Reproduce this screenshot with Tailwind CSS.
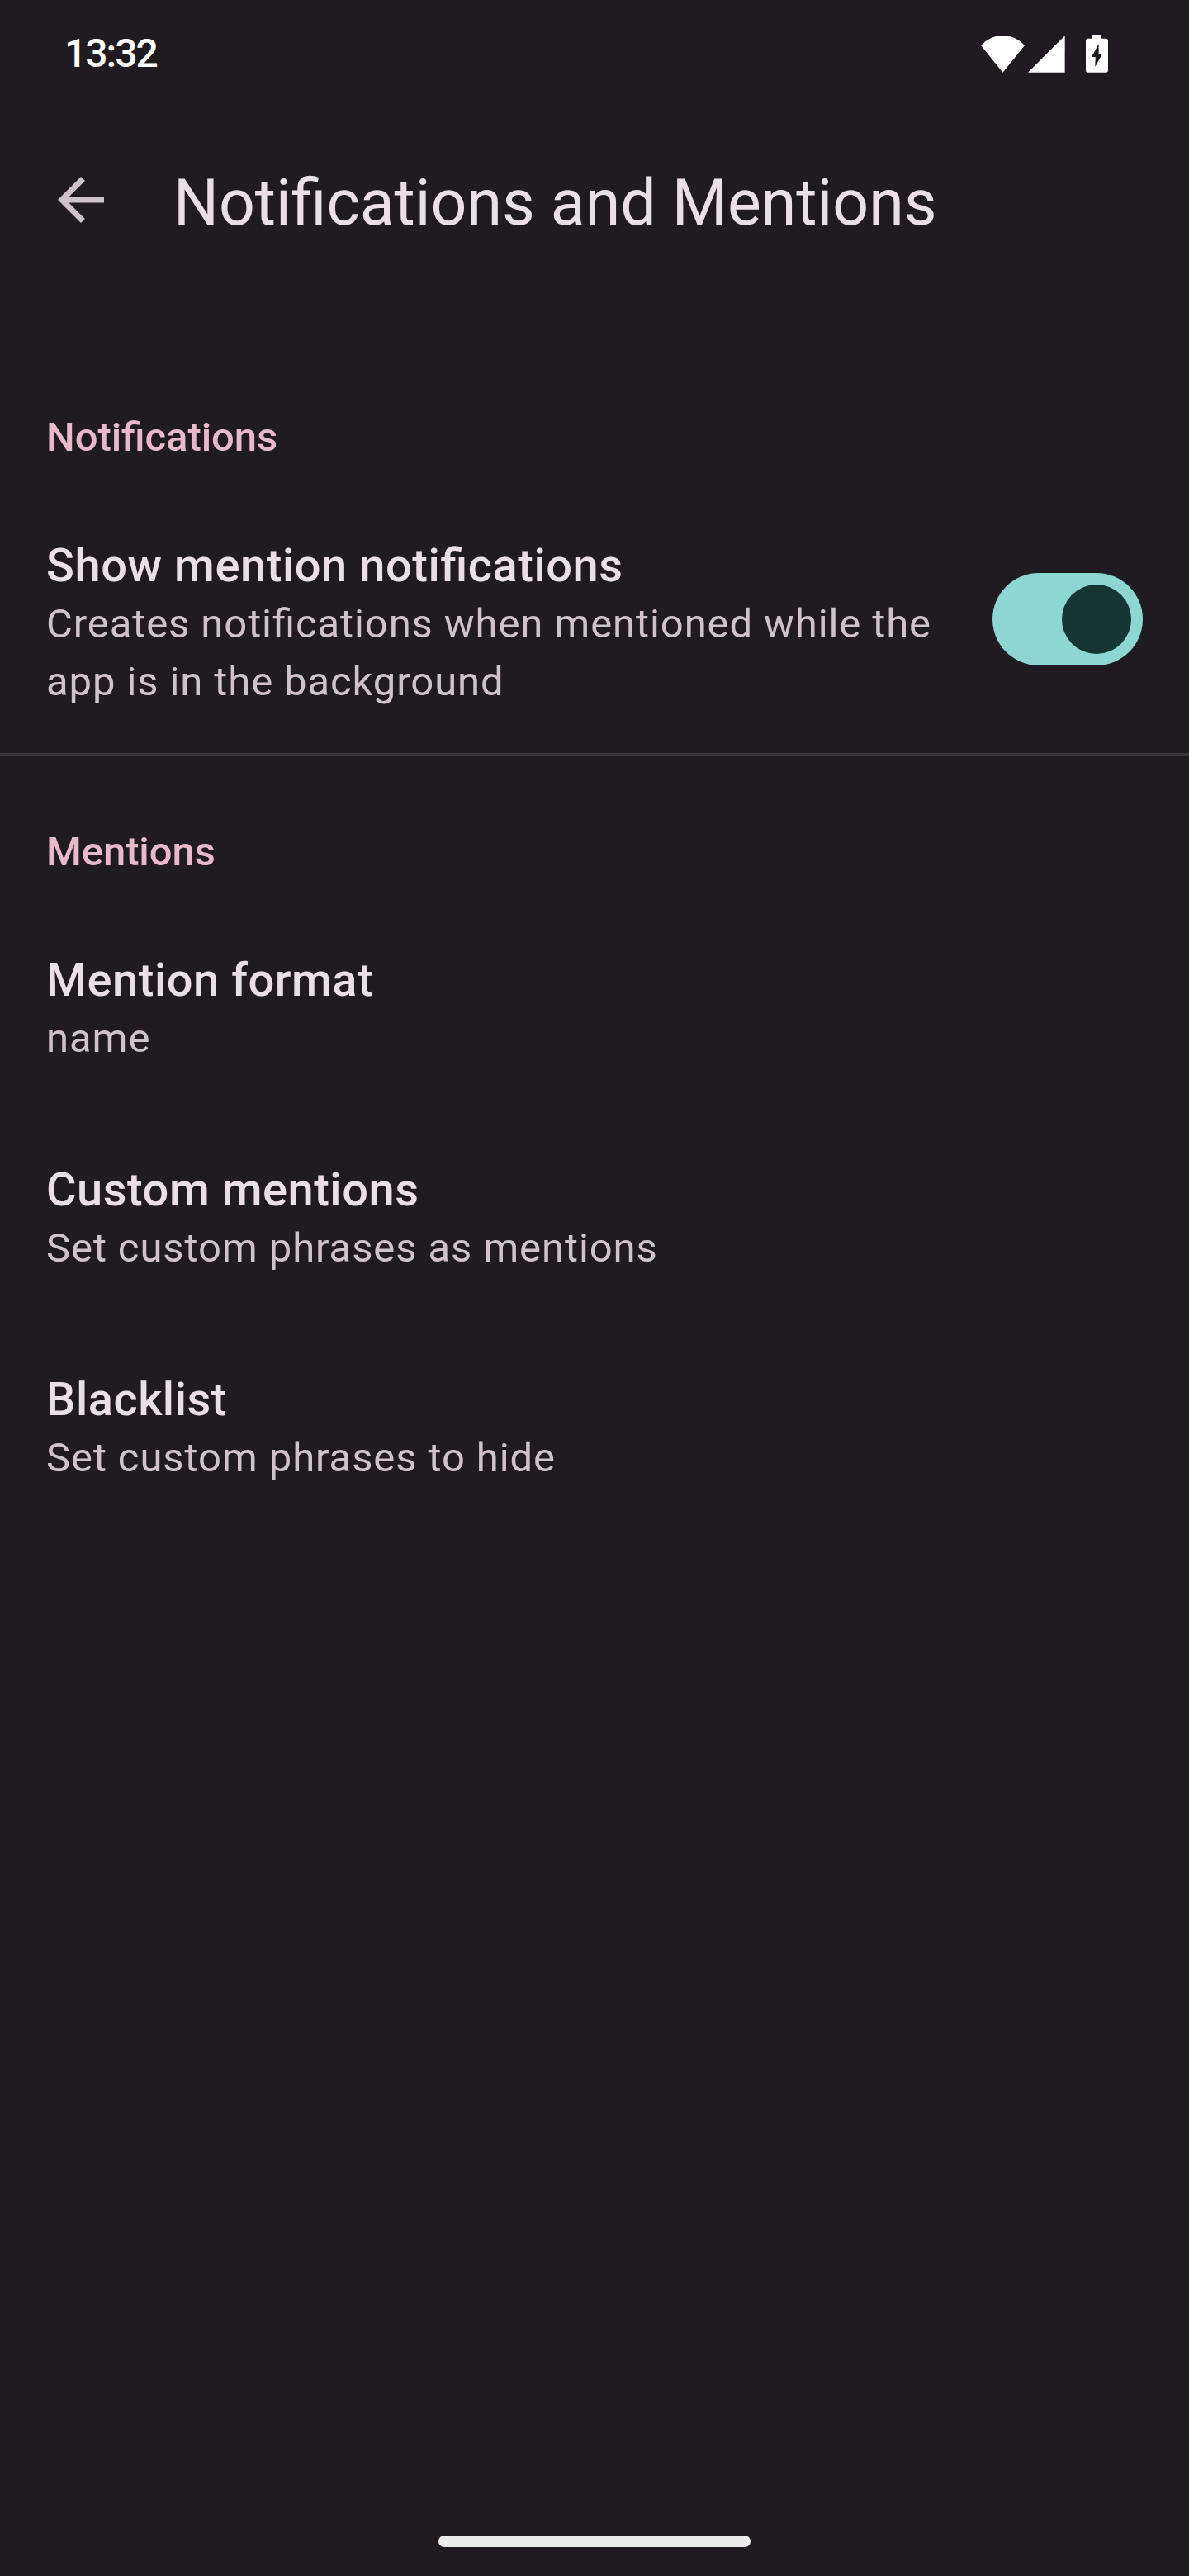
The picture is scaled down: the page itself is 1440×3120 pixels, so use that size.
<!DOCTYPE html>
<html lang="en">
<head>
<meta charset="utf-8">
<title>Notifications and Mentions</title>
<script src="https://cdn.jsdelivr.net/npm/@tailwindcss/browser@4"></script>
</head>
<body class="bg-[#201b20]">
<div class="flex h-[3120px] w-[1440px] flex-col overflow-hidden bg-[#201b20] font-['Roboto',sans-serif] text-[#eadfe6] [font-feature-settings:'liga'_1]">
  <!-- Status bar -->
  <header class="flex h-[130px] shrink-0 items-center justify-between pl-[78px] pr-[98px] text-white">
    <span class="text-[48px] leading-[70px] font-medium tracking-[-2px]">13:32</span>
    <div class="flex items-end">
      <svg class="h-[45px] w-[53px]" viewBox="84 69 159 135" fill="currentColor"><path d="M84 105Q118 69 163.500 69Q209 69 243 105L163.500 203Z"/></svg>
      <svg class="ml-[4px] h-[45px] w-[45px]" viewBox="256 69 135 135" fill="currentColor"><path d="M390 70V203H256Z"/></svg>
      <svg class="ml-[25px] h-[46px] w-[27px]" viewBox="465 66 81 138" fill="currentColor"><path fill-rule="evenodd" d="M487 66H522V80H538Q546 80 546 88V195Q546 203 538 203H473Q465 203 465 195V88Q465 80 473 80H487ZM512 99L486 147H500L499 183L525 135H512Z"/></svg>
    </div>
  </header>

  <!-- App bar -->
  <div class="flex h-[224px] shrink-0 items-center gap-[70px] px-[56px]">
    <svg class="h-[84px] w-[84px] text-[#d0c2cd]" viewBox="0 0 24 24" fill="currentColor"><path d="M20 11H7.830l5.590-5.590L12 4l-8 8 8 8 1.410-1.410L7.830 13H20z"/></svg>
    <h1 class="pt-[8px] text-[77px] leading-[98px] whitespace-nowrap">Notifications and Mentions</h1>
  </div>

  <main class="flex grow flex-col pt-[141px]">
    <section class="border-b-4 border-[#3b353b] px-[56px] pb-[51px]">
      <h2 class="text-[49px] leading-[70px] font-medium tracking-[-0.08px] text-[#e8b9c8]">Notifications</h2>
      <div class="mt-[75px] flex items-start justify-between">
        <div class="w-[1100px] pt-[10px]">
          <h3 class="text-[56px] leading-[70px] font-medium tracking-[0.56px]">Show mention notifications</h3>
          <p class="pt-px text-[49px] leading-[70px] tracking-[0.9px] text-[#d0c2cd]">Creates notifications when mentioned while the<br>app is in the background</p>
        </div>
        <div class="mt-[54px] flex h-[112px] w-[182px] items-center justify-end rounded-full bg-[#8dd6d1] pr-[14px]">
          <div class="size-[84px] rounded-full bg-[#163635]"></div>
        </div>
      </div>
    </section>

    <section class="px-[56px] pt-[81px]">
      <h2 class="text-[49px] leading-[70px] font-medium tracking-[-0.08px] text-[#e8b9c8]">Mentions</h2>
      <div class="mt-[85px] flex flex-col gap-[113px]">
        <div>
          <h3 class="text-[56px] leading-[70px] font-medium tracking-[0.525px]">Mention format</h3>
          <p class="pt-px text-[49px] leading-[70px] tracking-[0.9px] text-[#d0c2cd]">name</p>
        </div>
        <div>
          <h3 class="text-[56px] leading-[70px] font-medium tracking-[0.525px]">Custom mentions</h3>
          <p class="pt-px text-[49px] leading-[70px] tracking-[0.9px] text-[#d0c2cd]">Set custom phrases as mentions</p>
        </div>
        <div>
          <h3 class="text-[56px] leading-[70px] font-medium tracking-[0.525px]">Blacklist</h3>
          <p class="pt-px text-[49px] leading-[70px] tracking-[0.9px] text-[#d0c2cd]">Set custom phrases to hide</p>
        </div>
      </div>
    </section>
  </main>

  <!-- Gesture bar -->
  <footer class="flex shrink-0 justify-center pb-[35px]">
    <div class="h-[14px] w-[378px] rounded-full bg-[#ececec]"></div>
  </footer>
</div>
</body>
</html>
